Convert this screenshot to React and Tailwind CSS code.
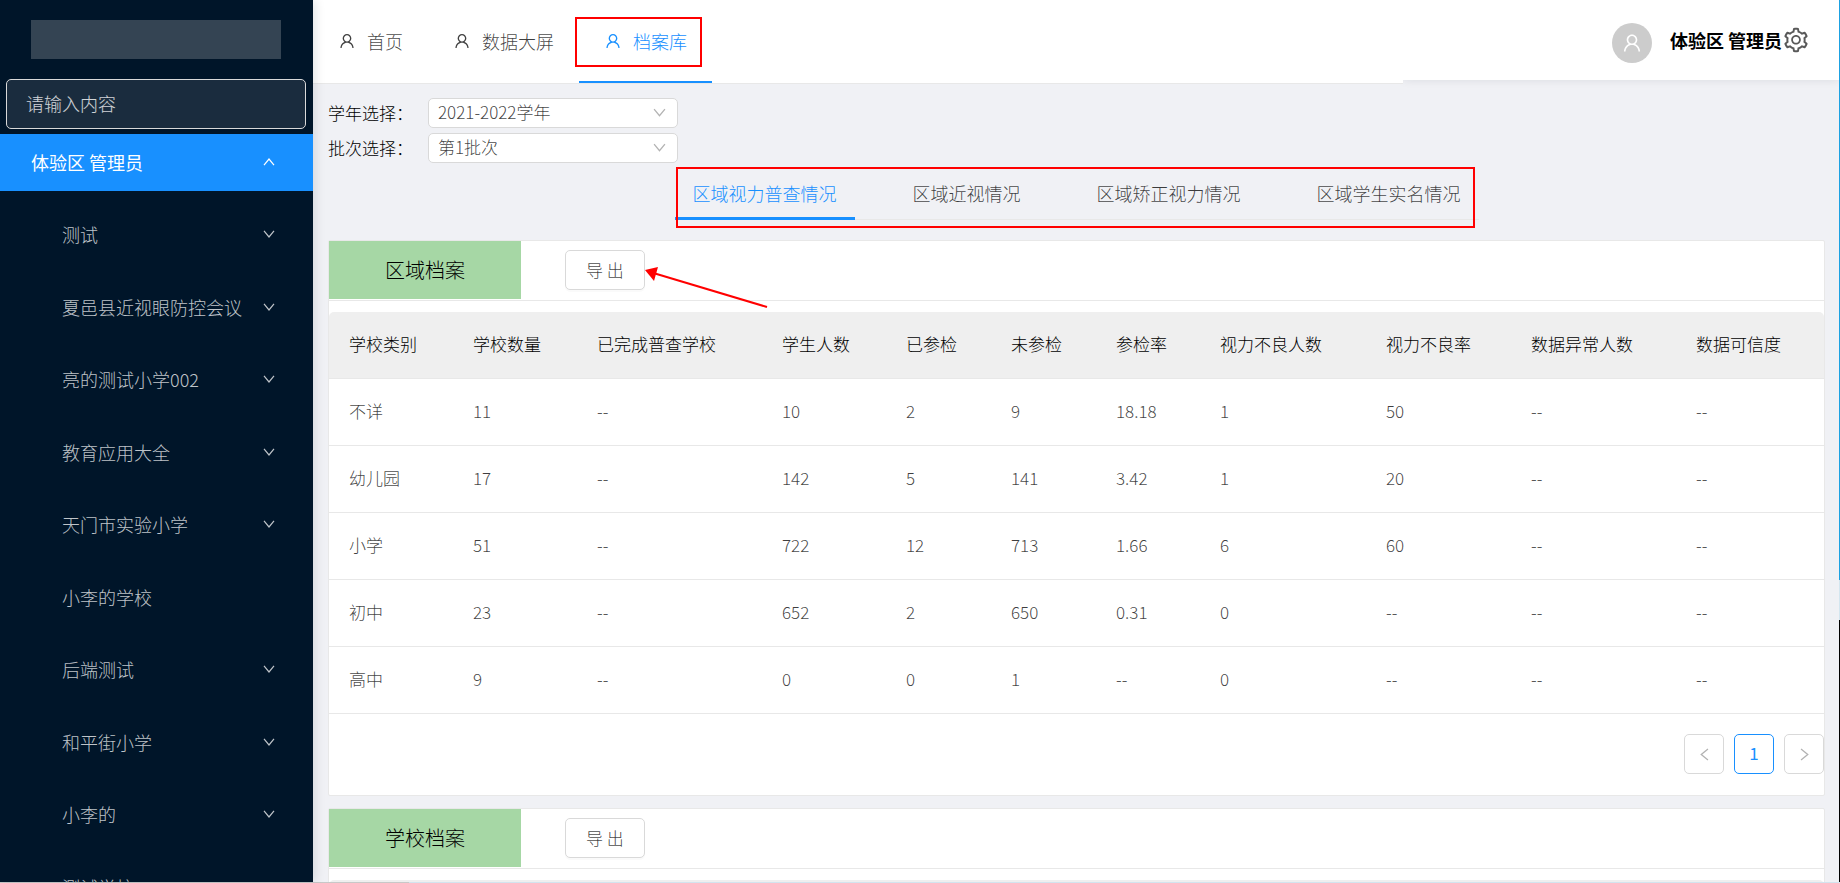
import React, { useState } from 'react';
import { AiOutlineUser, AiOutlineSetting } from 'react-icons/ai';

const navItems = ['首页', '数据大屏', '档案库'];

const schools = [
  { name: '测试', open: true },
  { name: '夏邑县近视眼防控会议', open: true },
  { name: '亮的测试小学002', open: true },
  { name: '教育应用大全', open: true },
  { name: '天门市实验小学', open: true },
  { name: '小李的学校', open: false },
  { name: '后端测试', open: true },
  { name: '和平街小学', open: true },
  { name: '小李的', open: true },
  { name: '测试学校', open: false },
];

const tabs = ['区域视力普查情况', '区域近视情况', '区域矫正视力情况', '区域学生实名情况'];

const columns = [
  { title: '学校类别', width: 124 },
  { title: '学校数量', width: 124 },
  { title: '已完成普查学校', width: 185 },
  { title: '学生人数', width: 124 },
  { title: '已参检', width: 105 },
  { title: '未参检', width: 105 },
  { title: '参检率', width: 104 },
  { title: '视力不良人数', width: 166 },
  { title: '视力不良率', width: 145 },
  { title: '数据异常人数', width: 165 },
  { title: '数据可信度', width: 148 },
];

const rows = [
  ['不详', '11', '--', '10', '2', '9', '18.18', '1', '50', '--', '--'],
  ['幼儿园', '17', '--', '142', '5', '141', '3.42', '1', '20', '--', '--'],
  ['小学', '51', '--', '722', '12', '713', '1.66', '6', '60', '--', '--'],
  ['初中', '23', '--', '652', '2', '650', '0.31', '0', '--', '--', '--'],
  ['高中', '9', '--', '0', '0', '1', '--', '0', '--', '--', '--'],
];

const Chevron = ({ className }) => (
  <svg viewBox="0 0 12 8" fill="none" stroke="currentColor" strokeWidth="1.2" className={className} aria-hidden="true">
    <path d="M1 0.8 L6 7 L11 0.8" />
  </svg>
);

const SelectRow = ({ id, label, options }) => (
  <div className="flex items-center">
    <label htmlFor={id} className="w-[100px] text-[17px] leading-7 text-black whitespace-nowrap">{label}：</label>
    <div className="relative w-[250px]">
      <select
        id={id}
        className="block w-full h-[30px] px-[9px] pb-[2px] appearance-none rounded-[5px] border border-[#d9d9d9] bg-white text-[17px] leading-[26px] text-black/75"
      >
        {options.map((option) => <option key={option}>{option}</option>)}
      </select>
      <Chevron className="absolute right-3 top-[10px] w-[13px] h-[9px] text-black/30 pointer-events-none" />
    </div>
  </div>
);

const ArchiveCard = ({ title, pointer, children }) => (
  <section className="rounded-[2px] border border-[#e8e8e8] bg-white">
    <div className="flex h-[60px] border-b border-[#e8e8e8]">
      <h2 className="flex items-center justify-center w-[192px] h-[58px] bg-[#a6d7a5] text-xl text-black">{title}</h2>
      <div className="relative ml-11 mt-[9px]">
        <button className="w-20 h-10 rounded-[5px] border border-[#d9d9d9] bg-white text-[17px] text-black/75 shadow-[0_2px_0_rgba(0,0,0,0.02)]">
          导 出
        </button>
        {pointer && (
          <svg viewBox="0 0 126 50" fill="none" className="absolute left-20 top-[10px] w-[126px] h-[50px] pointer-events-none" aria-hidden="true">
            <path d="M10 13.5 L122 47" stroke="#ff0000" strokeWidth="2" />
            <path d="M0 10 L13 7 L9 21 Z" fill="#ff0000" />
          </svg>
        )}
      </div>
    </div>
    {children}
  </section>
);

const App = () => {
  const [activeTab, setActiveTab] = useState(0);

  return (
    <div className="flex flex-col h-screen overflow-hidden font-light font-['Noto_Sans_CJK_SC',sans-serif]">
      <div className="flex flex-1 min-h-0 bg-[#f0f1f5]">

        {/* Sidebar */}
        <aside className="relative z-10 flex flex-col shrink-0 w-[313px] overflow-hidden bg-[#001529] shadow-[2px_0_10px_rgba(0,21,41,0.12)]">
          <div className="shrink-0 ml-[31px] mr-8 my-5 h-[39px] bg-[#344453]"></div>
          <input
            type="text"
            aria-label="搜索"
            placeholder="请输入内容"
            className="shrink-0 ml-[6px] mr-[7px] h-[50px] px-[19px] pb-[2px] rounded-[5px] border border-[#d9d9d9] bg-[#1a2c3e] text-lg text-white placeholder:text-white/80 focus:outline-none"
          />
          <button className="flex items-center justify-between shrink-0 mt-[5px] h-[57px] pl-[31px] pr-[38px] pb-[2px] bg-[#1890ff] text-lg font-normal text-white">
            体验区 管理员
            <Chevron className="w-3 h-2 rotate-180" />
          </button>
          <ul className="grid auto-rows-fr shrink-0 mt-[7px] h-[725px]">
            {schools.map((school) => (
              <li key={school.name} className="grid">
                <button className="flex items-center justify-between pl-[62px] pr-[38px] text-lg text-white/75">
                  {school.name}
                  {school.open && <Chevron className="w-3 h-2" />}
                </button>
              </li>
            ))}
          </ul>
        </aside>

        <div className="flex flex-col flex-1 min-w-0">

          {/* Header */}
          <header className="flex items-start shrink-0">
            <nav className="relative z-[1] flex flex-1 h-[84px] border-b border-[#e8e8e8] bg-white">
              {navItems.map((item) => {
                const active = item === '档案库';
                return (
                  <a
                    key={item}
                    href="#"
                    className={`relative flex items-center gap-[11px] h-[83px] px-[25px] text-lg whitespace-nowrap border-b-2 ${active ? 'border-[#1890ff] text-[#1890ff]' : 'border-transparent text-black/75'}`}
                  >
                    <AiOutlineUser className="w-[18px] h-[18px]" />
                    {item}
                    {active && <span className="absolute -left-1 right-[10px] top-[17px] h-[50px] border-2 border-[#ff0000]"></span>}
                  </a>
                );
              })}
            </nav>
            <div className="flex items-center justify-end w-[436px] h-20 pr-[29px] bg-white shadow-[0_1px_8px_rgba(0,21,41,0.08)]">
              <span className="flex items-center justify-center w-10 h-10 mt-[6px] mr-[18px] rounded-full bg-[#ccc] text-white">
                <AiOutlineUser className="w-[22px] h-[22px]" />
              </span>
              <span className="text-lg font-bold text-black">体验区 管理员</span>
              <button aria-label="设置" className="text-black/65">
                <AiOutlineSetting className="w-7 h-7" />
              </button>
            </div>
          </header>

          <main className="flex-1 min-h-0 overflow-y-auto [scrollbar-width:none] pl-[15px] pr-[14px] pt-[14px]">

            {/* Filters */}
            <form className="flex flex-col gap-[5px]">
              <SelectRow id="year" label="学年选择" options={['2021-2022学年']} />
              <SelectRow id="batch" label="批次选择" options={['第1批次']} />
            </form>

            {/* Tabs */}
            <div className="flex justify-center mt-[5px] mb-5">
              <div className="relative flex gap-10 border-b border-[#e8e8e8]" role="tablist">
                {tabs.map((tab, index) => (
                  <button
                    key={tab}
                    role="tab"
                    aria-selected={activeTab === index}
                    onClick={() => setActiveTab(index)}
                    className={`h-[52px] -mb-px px-[18px] text-lg border-b-3 whitespace-nowrap ${activeTab === index ? 'border-[#1890ff] text-[#1890ff]' : 'border-transparent text-black/75'}`}
                  >
                    {tab}
                  </button>
                ))}
                <span className="absolute left-px right-1 -top-px -bottom-[9px] border-2 border-[#ff0000] pointer-events-none"></span>
              </div>
            </div>

            {/* Archives */}
            <div className="flex flex-col gap-3">
              <ArchiveCard title="区域档案" pointer>
                <table className="mt-[11px] w-full table-fixed border-separate border-spacing-0 text-left text-[17px]">
                  <colgroup>
                    {columns.map((column) => <col key={column.title} style={{ width: column.width }} />)}
                  </colgroup>
                  <thead>
                    <tr className="h-[67px]">
                      {columns.map((column) => (
                        <th key={column.title} className="px-5 pb-[2px] border-b border-[#e8e8e8] bg-[#efefef] font-light text-black whitespace-nowrap first:rounded-tl-[5px] last:rounded-tr-[5px]">
                          {column.title}
                        </th>
                      ))}
                    </tr>
                  </thead>
                  <tbody>
                    {rows.map((row) => (
                      <tr key={row[0]} className="h-[67px]">
                        {row.map((cell, i) => (
                          <td key={i} className="px-5 pb-[2px] border-b border-[#e8e8e8] text-black/75">{cell}</td>
                        ))}
                      </tr>
                    ))}
                  </tbody>
                </table>

                <div className="flex justify-end gap-[10px] pt-5 pb-[21px]">
                  <button aria-label="上一页" className="flex items-center justify-center w-10 h-10 rounded-[5px] border border-[#d9d9d9] text-black/30">
                    <Chevron className="w-[13px] h-[9px] rotate-90" />
                  </button>
                  <button className="w-10 h-10 pb-[2px] rounded-[5px] border border-[#1890ff] text-[17px] font-normal text-[#1890ff]">1</button>
                  <button aria-label="下一页" className="flex items-center justify-center w-10 h-10 rounded-[5px] border border-[#d9d9d9] text-black/30">
                    <Chevron className="w-[13px] h-[9px] -rotate-90" />
                  </button>
                </div>
              </ArchiveCard>

              <ArchiveCard title="学校档案">
                <div className="mt-[11px] h-[67px] rounded-t-[5px] bg-[#efefef]"></div>
              </ArchiveCard>
            </div>
          </main>
        </div>

        {/* Window edge */}
        <div className="flex flex-col shrink-0 w-px">
          <div className="basis-[580px] bg-[#1ba1e2]"></div>
          <div className="basis-10 bg-[#d3e6f0]"></div>
          <div className="flex-1 bg-black"></div>
        </div>
      </div>
      <div className="flex shrink-0 h-px bg-[#d3e3ee]">
        <div className="w-[409px] bg-[#c8c8c8]"></div>
      </div>
    </div>
  );
};

export default App;
